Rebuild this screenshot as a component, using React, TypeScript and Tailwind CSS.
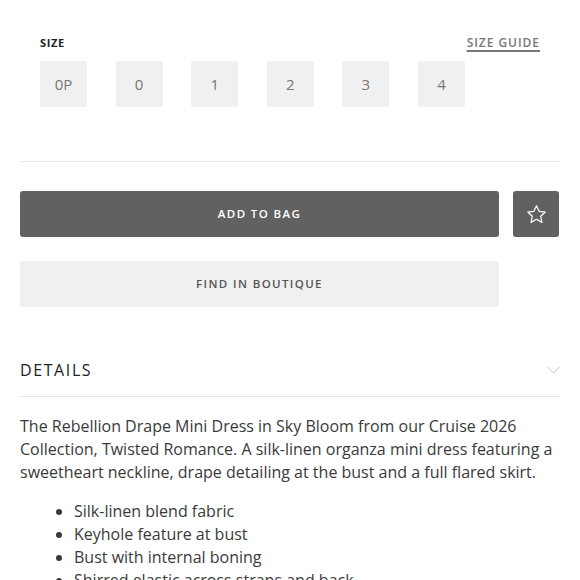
import React from 'react';

const sizes = ['0P', '0', '1', '2', '3', '4'];

const bullets = [
  'Silk-linen blend fabric',
  'Keyhole feature at bust',
  'Bust with internal boning',
  'Shirred elastic across straps and back',
];

const App: React.FC = () => {
  return (
    <div
      className="w-[580px] h-[580px] overflow-hidden bg-white px-5"
      style={{ fontFamily: '"Open Sans", "Liberation Sans", sans-serif' }}
    >
      {/* size picker */}
      <div className="pt-[36px] px-5">
        <div className="flex items-center justify-between h-[14px]">
          <span className="text-[11px] font-bold tracking-[0.06em] text-[#222]">SIZE</span>
          <span className="text-[12px] font-semibold tracking-[0.08em] text-[#777] underline underline-offset-[3px] decoration-[2px]">
            SIZE GUIDE
          </span>
        </div>
        <div className="flex gap-[28.6px] mt-[11px]">
          {sizes.map(s => (
            <button
              key={s}
              className="w-[47px] h-[46px] rounded-[2px] bg-[#f0f0f0] text-[15px] text-[#777] flex items-center justify-center"
            >
              {s}
            </button>
          ))}
        </div>
      </div>

      <div className="mt-[54px] border-t border-[#e6e6e6]" />

      {/* actions */}
      <div className="mt-[29px] flex gap-[14px]">
        <button className="w-[479px] h-[46px] rounded-[3px] bg-[#616161] text-white text-[11.5px] font-semibold tracking-[0.12em]">
          ADD TO BAG
        </button>
        <button className="w-[46px] h-[46px] rounded-[3px] bg-[#616161] flex items-center justify-center">
          <svg width="23" height="23" viewBox="0 0 24 24" fill="none" stroke="white" strokeWidth="1.25" strokeLinejoin="round">
            <path d="M12 2.8l2.75 5.9 6.4.75-4.75 4.4 1.3 6.35L12 17l-5.7 3.2 1.3-6.35-4.75-4.4 6.4-.75z" />
          </svg>
        </button>
      </div>
      <button className="mt-[24px] w-[479px] h-[46px] rounded-[3px] bg-[#f0f0f0] text-[#555] text-[11.5px] font-semibold tracking-[0.12em]">
        FIND IN BOUTIQUE
      </button>

      {/* details */}
      <div className="mt-[51px] flex items-center justify-between pb-[14px] border-b border-[#e6e6e6]">
        <span className="text-[16px] tracking-[0.1em] text-[#222]">DETAILS</span>
        <svg width="13" height="8" viewBox="0 0 13 8" fill="none" stroke="#c4c4c4" strokeWidth="1">
          <path d="M0.5 0.8l6 6 6-6" />
        </svg>
      </div>

      <p className="mt-[18px] text-[16px] leading-[23px] text-[#3a3a3a]">
        The Rebellion Drape Mini Dress in Sky Bloom from our Cruise 2026 Collection, Twisted Romance. A
        silk-linen organza mini dress featuring a sweetheart neckline, drape detailing at the bust and a full
        flared skirt.
      </p>

      <ul className="mt-[16px] list-disc pl-[54px] text-[16px] leading-[23px] text-[#3a3a3a]">
        {bullets.map(b => (
          <li key={b}>{b}</li>
        ))}
      </ul>
    </div>
  );
};

export default App;
